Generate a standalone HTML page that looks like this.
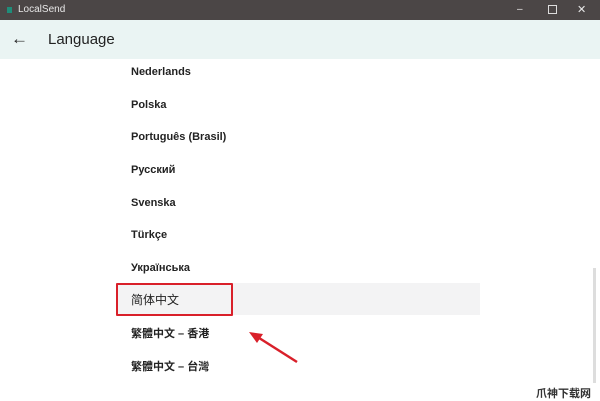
<!DOCTYPE html><html><head><style>
body{margin:0;width:600px;height:401px;overflow:hidden;background:#fff;font-family:"Liberation Sans","Noto Sans CJK SC",sans-serif;position:relative}
.tb{position:absolute;left:0;top:0;width:600px;height:20px;background:#4b4646;color:#e8e8e8;font-size:10px}
.hd{position:absolute;left:0;top:20px;width:600px;height:39px;background:#eaf4f3}
.row{position:absolute;left:131px;font-size:11px;font-weight:bold;color:#222}
</style></head><body>
<div class="tb"><span style="position:absolute;left:7px;top:7px;width:5px;height:6px;background:#1f8d7a"></span><span style="position:absolute;left:18px;top:4px">LocalSend</span>
<span style="position:absolute;left:517px;top:4px">–</span><span style="position:absolute;left:548px;top:5px;width:7px;height:7px;border:1px solid #ddd"></span><span style="position:absolute;left:577px;top:3px;font-size:11px">✕</span></div>
<div class="hd"><span style="position:absolute;left:11px;top:9px;font-size:17px;color:#222">←</span><span style="position:absolute;left:48px;top:11px;font-size:15px;color:#222">Language</span></div>
<div style="position:absolute;left:116px;top:283px;width:364px;height:32px;background:#f3f3f4"></div>
<div style="position:absolute;left:116px;top:283px;width:113px;height:29px;border:2px solid #d9202a;border-radius:1px"></div>
<div class="row" style="top:66px">Nederlands</div>
<div class="row" style="top:99px">Polska</div>
<div class="row" style="top:131px">Português (Brasil)</div>
<div class="row" style="top:164px">Русский</div>
<div class="row" style="top:197px">Svenska</div>
<div class="row" style="top:229px">Türkçe</div>
<div class="row" style="top:262px">Українська</div>
<div class="row" style="top:291px;font-weight:normal;font-size:12px">简体中文</div>
<div class="row" style="top:325px">繁體中文 – 香港</div>
<div class="row" style="top:358px">繁體中文 – 台灣</div>
<svg style="position:absolute;left:0;top:0" width="600" height="401"><line x1="297" y1="362" x2="256" y2="336" stroke="#d9202a" stroke-width="2.5"/><polygon points="249,332 263,334 257,343" fill="#d9202a"/></svg>
<div style="position:absolute;left:593px;top:268px;width:3px;height:115px;background:#ddd"></div>
<div style="position:absolute;left:536px;top:385px;font-size:11px;font-weight:bold;color:#333">爪神下载网</div>
</body></html>
